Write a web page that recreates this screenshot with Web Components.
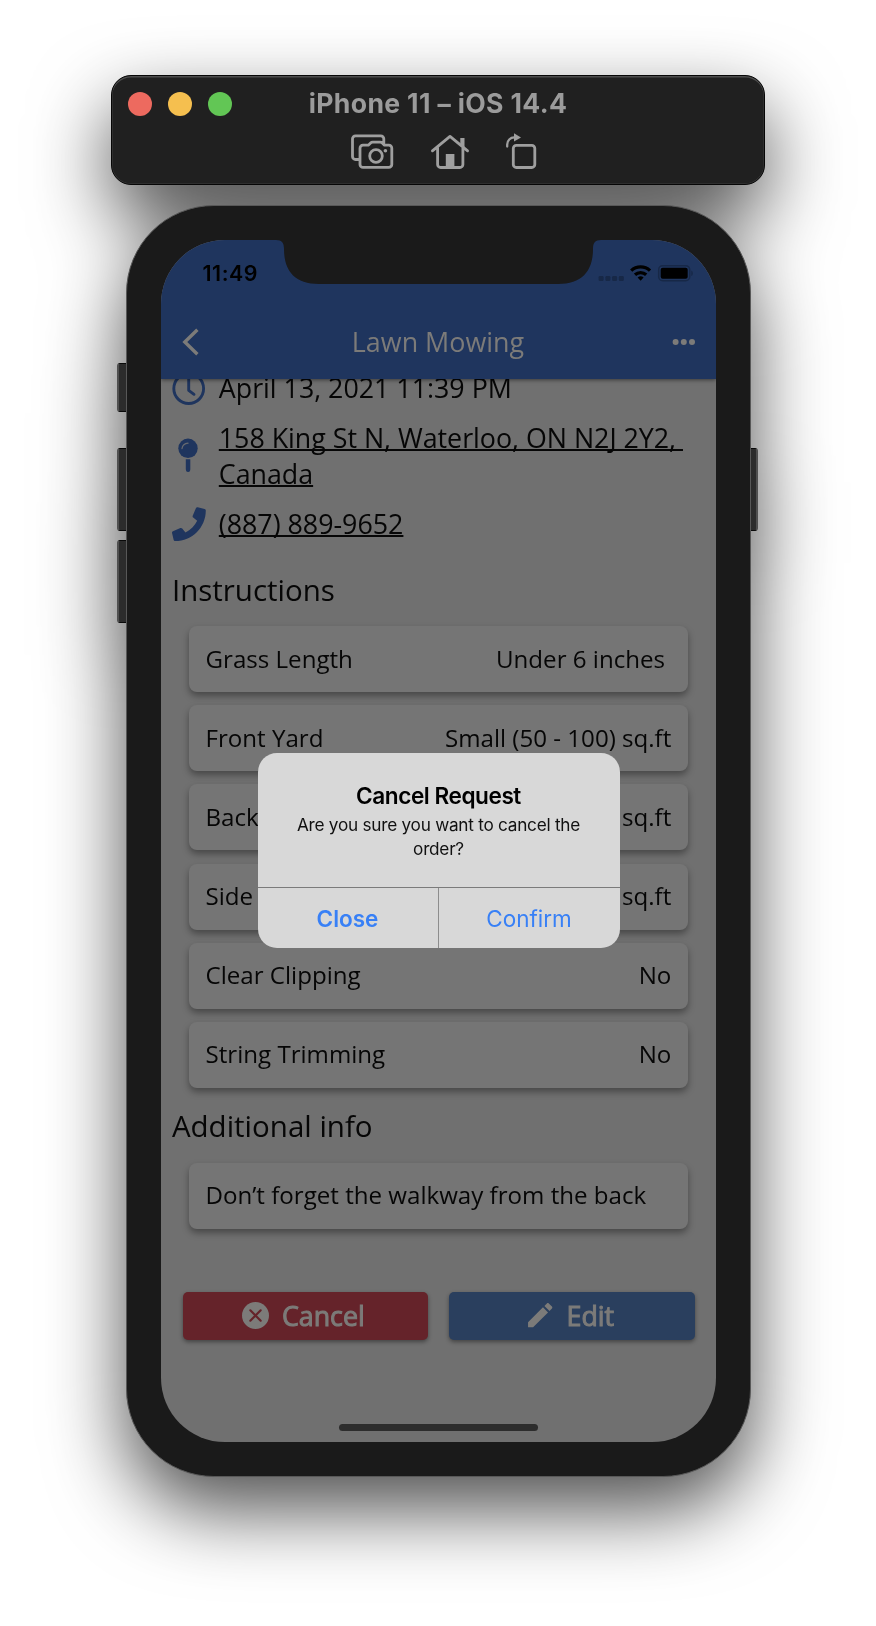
<!DOCTYPE html>
<html lang="en">
<head>
<meta charset="utf-8">
<title>iPhone 11 – iOS 14.4</title>
<style>
html,body{margin:0;background:#fff;}
body{width:876px;height:1626px;overflow:hidden;}
</style>
</head>
<body>
<sim-stage>
  <sim-toolbar>iPhone 11 – iOS 14.4</sim-toolbar>
  <sim-phone>
    <status-bar>11:49</status-bar>
    <nav-header>Lawn Mowing</nav-header>
    <detail-list>
      <detail-item icon="clock">April 13, 2021 11:39 PM</detail-item>
      <detail-item icon="pin" link style="--ls:-.01px">158 King St N, Waterloo, ON N2J 2Y2,&nbsp;<br>Canada</detail-item>
      <detail-item icon="phone" link>(887) 889-9652</detail-item>
    </detail-list>
    <info-section heading="Instructions" style="margin-top:27.5px">
      <info-card><span>Grass Length</span><span slot="value">Under 6 inches&nbsp;</span></info-card>
      <info-card><span>Front Yard</span><span slot="value">Small (50 - 100) sq.ft</span></info-card>
      <info-card><span>Back</span><span slot="value">sq.ft</span></info-card>
      <info-card><span>Side</span><span slot="value">sq.ft</span></info-card>
      <info-card><span>Clear Clipping</span><span slot="value">No</span></info-card>
      <info-card><span>String Trimming</span><span slot="value">No</span></info-card>
    </info-section>
    <info-section heading="Additional info" style="margin-top:18.4px">
      <info-card><span>Don’t forget the walkway from the back</span></info-card>
    </info-section>
    <action-row>
      <action-button kind="cancel">Cancel</action-button>
      <action-button kind="edit">Edit</action-button>
    </action-row>
    <alert-dialog slot="overlay">
      <span slot="title">Cancel Request</span>
      <span slot="message">Are you sure you want to cancel the<br>order?</span>
      <span slot="close">Close</span>
      <span slot="confirm">Confirm</span>
    </alert-dialog>
  </sim-phone>
</sim-stage>
<script>
const define = (name, html, setup) => {
  const t = document.createElement('template');
  t.innerHTML = html;
  customElements.define(name, class extends HTMLElement {
    constructor() {
      super();
      this.attachShadow({mode: 'open'}).append(t.content.cloneNode(true));
    }
    connectedCallback() { if (setup) setup(this, this.shadowRoot); }
  });
};

define('sim-stage', `
<style>
:host{display:flex;flex-direction:column;align-items:center;box-sizing:border-box;width:876px;height:1626px;padding-top:75px;gap:19.5px;filter:drop-shadow(0 33px 39px rgba(0,0,0,.69));}
</style><slot></slot>`);

define('sim-toolbar', `
<style>
:host{display:block;box-sizing:border-box;width:654px;height:110px;border-radius:20px;background:#202020;border:1px solid #060606;box-shadow:inset 0 1.5px 0 #4d4d4d,inset 0 0 0 .5px #3c3c3c;font:700 26.6px/34px Inter,sans-serif;color:#9b9b9b;}
.top{display:grid;grid-template-columns:1fr auto 1fr;align-items:center;height:34px;margin-top:9px;}
.top span{letter-spacing:.35px;padding-top:1px}
.lights{display:flex;gap:16px;padding:3px 0 0 16px;}
.lights i{width:24px;height:24px;border-radius:50%;}
.icons{display:flex;margin:13px 0 0 238px;}
svg{display:block;fill:none;stroke:#9f9f9f;stroke-width:2.8;stroke-linecap:round;stroke-linejoin:round;height:39px;}
.f{fill:#9f9f9f;stroke:none}
</style>
<div class="top"><div class="lights"><i style="background:#ed6a5f"></i><i style="background:#f5bf4f"></i><i style="background:#62c655"></i></div><span><slot></slot></span><span></span></div>
<div class="icons">
<svg width="44" viewBox="350 132 44 39"><path d="M383.8 143.5v-4.7a3 3 0 0 0-3-3h-25.3a3 3 0 0 0-3 3v17.7a3 3 0 0 0 3 3h3.5M363 145.2h5.3l2.3-2.2a3 3 0 0 1 2-.8h7.6a3 3 0 0 1 2 .8l2.3 2.2h4.3a3 3 0 0 1 3 3v16.2a3 3 0 0 1-3 3H363a3 3 0 0 1-3-3v-16.2a3 3 0 0 1 3-3z"/><circle cx="376" cy="156" r="6.3"/><circle class="f" cx="385.4" cy="150.7" r="1.8"/></svg>
<svg width="40" viewBox="430 132 40 39" style="margin-left:36px"><path d="M432.4 150.8 450 136.4l17.6 14.4M437.6 148v16.5a3 3 0 0 0 3 3h19.3a3 3 0 0 0 3-3V148"/><path class="f" d="M445.8 154h8.6v13.5h-8.6zM460.3 138h4.2v10l-4.2-3.5z"/></svg>
<svg width="33" viewBox="505 132 33 39" style="margin-left:35px"><rect x="513.3" y="145.3" width="21.5" height="22.2" rx="3"/><path stroke-width="2.3" d="M507.2 146.6v-2.2a7 7 0 0 1 7-7h1"/><path class="f" d="M514 133.2v8.4l7-4.2z"/></svg>
</div>`);

define('sim-phone', `
<style>
:host{display:block;position:relative;box-sizing:border-box;width:625px;height:1272.5px;}
.side{position:absolute;box-sizing:border-box;width:12px;background:#2c2c2c;border:1px solid #090909;border-left:2px solid #505050;border-radius:3px 0 0 3px;left:-9px;}
.side.r{left:auto;right:-7px;border-left:0;border-right:2px solid #505050;border-radius:0 3px 3px 0;}
.body{position:relative;box-sizing:border-box;height:100%;padding:34.5px 34px 34px 34px;border-radius:88px;background:#1a1a1a;border:1.5px solid #585858;}
.screen{position:relative;display:flex;flex-direction:column;box-sizing:border-box;width:555px;height:1202px;overflow:hidden;border-radius:64px;background:#707070;color:#060606;font-family:"Open Sans",sans-serif;}
.notch{position:absolute;z-index:3;left:115px;top:-1px;}
.home{position:absolute;left:178px;bottom:11px;width:199px;height:7px;border-radius:4px;background:#2d2d2d;}
</style>
<div class="side" style="top:158.500px;height:49px"></div>
<div class="side" style="top:243.500px;height:83px"></div>
<div class="side" style="top:335.500px;height:83px"></div>
<div class="side r" style="top:243.500px;height:83px"></div>
<div class="body"><div class="screen"><slot></slot>
<svg class="notch" width="325" height="47" viewBox="0 0 325 47"><path fill="#1a1a1a" d="M0 0V1c6 0 8 3 8 9 0 23 12 35 35 35h239c23 0 35-12 35-35 0-6 2-9 8-9V0z"/></svg>
<div class="home"></div><slot name="overlay"></slot></div></div>`);

define('status-bar', `
<style>
:host{display:flex;flex:none;position:relative;z-index:2;justify-content:space-between;align-items:flex-start;height:65px;background:#1f355e;padding:0 22px 0 42px;font:600 21.4px/26px Inter,sans-serif;color:#000;}
.t{padding-top:20px;letter-spacing:.55px}
svg{display:block;margin-top:23px}
</style>
<div class="t"><slot></slot></div>
<svg width="98" height="20" viewBox="596 263 98 20"><g fill="#172847"><rect x="598.6" y="276" width="5" height="5" rx="1.3"/><rect x="605.4" y="276" width="5" height="5" rx="1.3"/><rect x="612.1" y="276" width="5" height="5" rx="1.3"/><rect x="618.8" y="276" width="5" height="5" rx="1.3"/><path d="M691.3 270.5c2 .6 2 5 0 5.600z"/></g><g fill="none" stroke="#000" stroke-width="3.3"><path d="M631.2 270.600a13.800 13.800 0 0 1 18.800 0M635 274.800a8.200 8.200 0 0 1 11.200 0"/></g><path fill="#000" d="M640.600 280.700l-3-3.100a4.400 4.400 0 0 1 6 0z"/><rect x="658.700" y="265.700" width="31" height="15" rx="4" fill="none" stroke="#172847" stroke-width="1.500"/><rect x="660.700" y="267.700" width="27" height="11" rx="2"/></svg>`);

define('nav-header', `
<style>
:host{display:grid;flex:none;grid-template-columns:1fr auto 1fr;align-items:center;position:relative;z-index:1;height:74px;background:#1f355e;box-shadow:0 1px 4px rgba(0,0,0,.5);color:#7c7b79;font-size:26.900px;line-height:36px;padding:0 20px;}
svg{display:block}
svg:last-child{justify-self:end}
</style>
<svg width="20" height="30" viewBox="181 327 20 30" fill="none" stroke="#7c7b79" stroke-width="3.400" stroke-linecap="butt"><path d="M197.400 329.700 184.800 342l12.600 12.300"/></svg>
<div class="t"><slot></slot></div>
<svg width="24" height="8" viewBox="672 338 24 8" fill="#7c7b79"><circle cx="675.600" cy="342" r="3"/><circle cx="683.800" cy="342" r="3"/><circle cx="692" cy="342" r="3"/></svg>`);

define('detail-list', `
<style>:host{display:flex;flex:none;flex-direction:column;gap:14px;margin-top:-9px;padding-left:10.300px;}</style><slot></slot>`);

const ICONS = {
  clock: '<svg width="36" height="36" viewBox="0 0 36 36"><g fill="none" stroke="#1f355e" stroke-width="2.900" stroke-linecap="round" stroke-linejoin="round"><circle cx="17.700" cy="18.600" r="14.900"/><path d="M17.700 8.300v12l5.300 4"/></g></svg>',
  pin: '<svg width="36" height="36" viewBox="0 1 36 36"><g fill="#1f355e"><circle cx="17" cy="11.300" r="9.700"/><path d="M14.800 22.300h4.500v9.500c0 3-1.200 3.200-2.200 3.200s-2.300-.3-2.300-3.200z"/></g><path d="M11 11.500c.5-3 3-5 6-5.300" fill="none" stroke="#66696f" stroke-width="1.300" stroke-linecap="round"/></svg>',
  phone: '<svg width="36" height="36" viewBox="0 0 36 36"><path transform="translate(1 1.300) scale(.0660)" fill="#1f355e" d="M493.400 24.600l-104-24c-11.300-2.600-22.900 3.300-27.500 13.900l-48 112c-4.200 9.800-1.400 21.300 6.900 28l60.600 49.600c-36 76.700-98.900 140.500-177.200 177.200l-49.600-60.600c-6.800-8.300-18.200-11.100-28-6.900l-112 48C3.900 366.500-2 378.100.6 389.400l24 104C27.100 504.200 36.700 512 48 512c256.100 0 464-207.500 464-464 0-11.200-7.700-20.900-18.600-23.400z"/></svg>'
};
define('detail-item', `
<style>
:host{display:flex;align-items:center;gap:12px;font-size:26.800px;line-height:36px;letter-spacing:var(--ls,0);white-space:nowrap;}
.i{width:36px;height:36px}
.i svg{display:block}
:host([link]) .t{text-decoration:underline;text-decoration-thickness:1.500px;text-underline-offset:1px;text-decoration-skip-ink:none}
</style><div class="i"></div><div class="t"><slot></slot></div>`, (el, r) => { r.querySelector('.i').innerHTML = ICONS[el.getAttribute('icon')]; });

define('info-section', `
<style>
:host{display:block;flex:none;}
h2{margin:0 0 16.600px 11.400px;font-weight:400;font-size:29.500px;line-height:40px;}
.c{display:flex;flex-direction:column;gap:13.200px;padding:0 27.500px 0 28px;}
</style><h2></h2><div class="c"><slot></slot></div>`, (el, r) => { r.querySelector('h2').textContent = el.getAttribute('heading'); });

define('info-card', `
<style>
:host{display:flex;justify-content:space-between;align-items:center;box-sizing:border-box;height:66px;padding:0 16.700px 1.200px 17px;border-radius:8px;background:#757575;box-shadow:0 4px 7px rgba(0,0,0,.36);font-size:24.120px;line-height:32px;white-space:nowrap;}
</style><slot></slot><slot name="value"></slot>`);

define('action-row', `<style>:host{display:flex;flex:none;gap:21.500px;margin:62.500px 21px 0 22px;}</style><slot></slot>`);

define('action-button', `
<style>
:host{display:flex;flex:1;align-items:center;justify-content:center;height:48px;border-radius:5px;box-shadow:0 2px 4px rgba(0,0,0,.4);color:#7c7b79;font-size:26.800px;line-height:36px;}
:host([kind=cancel]){background:#65232a;}
:host([kind=edit]){background:#2a3f5e;}
svg{display:block}
.t{-webkit-text-stroke:1px #7c7b79}
</style><span class="i"></span><span class="t"><slot></slot></span>`, (el, r) => {
  r.querySelector('.i').innerHTML = el.getAttribute('kind') === 'cancel'
    ? '<svg width="27" height="27" viewBox="48 48 416 416" style="margin:0 13px 0 -3.600px"><circle cx="256" cy="256" r="208" fill="#7c7b79"/><path d="M176 176l160 160M336 176 176 336" stroke="#65232a" stroke-width="34" stroke-linecap="round"/></svg>'
    : '<svg width="32.400" height="32.400" viewBox="0 0 24 24" style="margin:0 10.300px 0 -5.800px"><path fill="#7c7b79" d="M3 17.250V21h3.750L17.810 9.940l-3.750-3.750L3 17.250zM20.710 7.040c.39-.39.39-1.020 0-1.410l-2.340-2.340c-.39-.39-1.020-.39-1.410 0l-1.830 1.830 3.750 3.750 1.830-1.830z"/></svg>';
});

define('alert-dialog', `
<style>
:host{position:absolute;z-index:2;left:97px;top:512.500px;width:362px;height:195.500px;box-sizing:border-box;border-radius:19px;background:#d8d8d8;display:grid;grid-template-rows:134px 1fr;text-align:center;font-family:Inter,sans-serif;color:#000;overflow:hidden;white-space:nowrap;}
.m{padding-top:28px;}
.t{font-weight:600;font-size:22.600px;line-height:30px;letter-spacing:-.45px}
.s{font-size:17.200px;line-height:24px;letter-spacing:-.25px;color:#111;padding-top:2px}
.b{display:grid;grid-template-columns:1fr 1fr;border-top:1.300px solid #7b7b7b;color:#3880f6;font-size:22.500px;line-height:61px;}
.b div:first-child{font-weight:600;border-right:1.300px solid #8d8d8d;}
</style>
<div class="m"><div class="t"><slot name="title"></slot></div><div class="s"><slot name="message"></slot></div></div>
<div class="b"><div class="c"><slot name="close"></slot></div><div class="d"><slot name="confirm"></slot></div></div>`);
</script>
</body>
</html>
